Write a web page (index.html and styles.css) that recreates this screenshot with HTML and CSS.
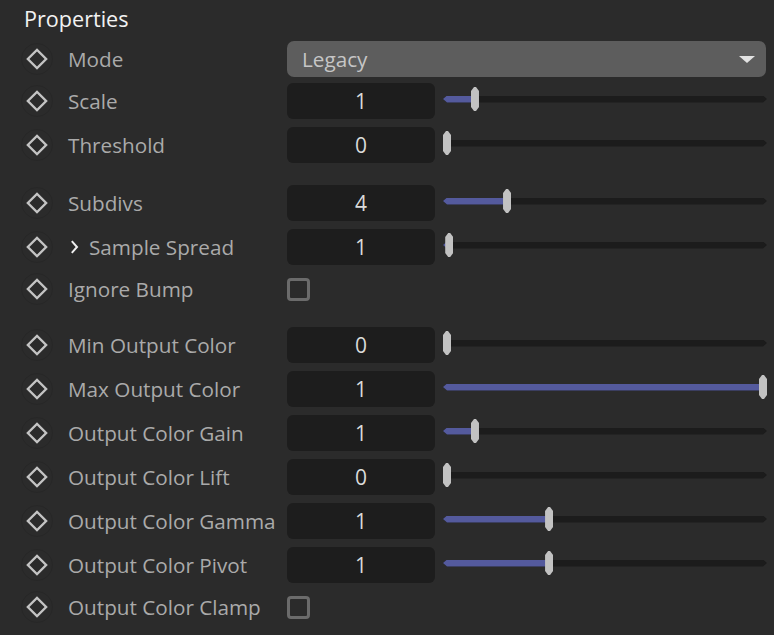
FILE: index.html
```html
<!DOCTYPE html>
<html>
<head>
<meta charset="utf-8">
<link rel="stylesheet" href="styles.css">
</head>
<body>
<div class="panel">
  <div class="title">Properties</div>

  <div class="group">
    <div class="row row--select">
      <span class="key"><svg viewBox="0 0 22 22" width="22" height="22"><rect x="4.5" y="4.5" width="13" height="13" transform="rotate(45 11 11)"/></svg></span>
      <span class="label">Mode</span>
      <div class="select"><span>Legacy</span><i class="caret"></i></div>
    </div>
    <div class="row">
      <span class="key"><svg viewBox="0 0 22 22" width="22" height="22"><rect x="4.5" y="4.5" width="13" height="13" transform="rotate(45 11 11)"/></svg></span>
      <span class="label">Scale</span>
      <div class="numslider"><div class="num">1</div><div class="slider" style="--v:0.0886"><div class="track"><div class="fill"></div></div><div class="thumb"></div></div></div>
    </div>
    <div class="row">
      <span class="key"><svg viewBox="0 0 22 22" width="22" height="22"><rect x="4.5" y="4.5" width="13" height="13" transform="rotate(45 11 11)"/></svg></span>
      <span class="label">Threshold</span>
      <div class="numslider"><div class="num">0</div><div class="slider" style="--v:0"><div class="track"><div class="fill"></div></div><div class="thumb"></div></div></div>
    </div>
  </div>

  <div class="group">
    <div class="row">
      <span class="key"><svg viewBox="0 0 22 22" width="22" height="22"><rect x="4.5" y="4.5" width="13" height="13" transform="rotate(45 11 11)"/></svg></span>
      <span class="label">Subdivs</span>
      <div class="numslider"><div class="num">4</div><div class="slider" style="--v:0.19"><div class="track"><div class="fill"></div></div><div class="thumb"></div></div></div>
    </div>
    <div class="row">
      <span class="key"><svg viewBox="0 0 22 22" width="22" height="22"><rect x="4.5" y="4.5" width="13" height="13" transform="rotate(45 11 11)"/></svg></span>
      <span class="label"><svg class="chev" viewBox="0 0 9 16" width="9" height="16"><polyline points="1.8,2.2 7,8 1.8,13.8"/></svg>Sample Spread</span>
      <div class="numslider"><div class="num">1</div><div class="slider" style="--v:0.007"><div class="track"><div class="fill"></div></div><div class="thumb"></div></div></div>
    </div>
    <div class="row row--check">
      <span class="key"><svg viewBox="0 0 22 22" width="22" height="22"><rect x="4.5" y="4.5" width="13" height="13" transform="rotate(45 11 11)"/></svg></span>
      <span class="label">Ignore Bump</span>
      <div class="checkwrap"><span class="check"></span></div>
    </div>
  </div>

  <div class="group">
    <div class="row">
      <span class="key"><svg viewBox="0 0 22 22" width="22" height="22"><rect x="4.5" y="4.5" width="13" height="13" transform="rotate(45 11 11)"/></svg></span>
      <span class="label">Min Output Color</span>
      <div class="numslider"><div class="num">0</div><div class="slider" style="--v:0"><div class="track"><div class="fill"></div></div><div class="thumb"></div></div></div>
    </div>
    <div class="row">
      <span class="key"><svg viewBox="0 0 22 22" width="22" height="22"><rect x="4.5" y="4.5" width="13" height="13" transform="rotate(45 11 11)"/></svg></span>
      <span class="label">Max Output Color</span>
      <div class="numslider"><div class="num">1</div><div class="slider" style="--v:1"><div class="track"><div class="fill"></div></div><div class="thumb"></div></div></div>
    </div>
    <div class="row">
      <span class="key"><svg viewBox="0 0 22 22" width="22" height="22"><rect x="4.5" y="4.5" width="13" height="13" transform="rotate(45 11 11)"/></svg></span>
      <span class="label">Output Color Gain</span>
      <div class="numslider"><div class="num">1</div><div class="slider" style="--v:0.0886"><div class="track"><div class="fill"></div></div><div class="thumb"></div></div></div>
    </div>
    <div class="row">
      <span class="key"><svg viewBox="0 0 22 22" width="22" height="22"><rect x="4.5" y="4.5" width="13" height="13" transform="rotate(45 11 11)"/></svg></span>
      <span class="label">Output Color Lift</span>
      <div class="numslider"><div class="num">0</div><div class="slider" style="--v:0"><div class="track"><div class="fill"></div></div><div class="thumb"></div></div></div>
    </div>
    <div class="row">
      <span class="key"><svg viewBox="0 0 22 22" width="22" height="22"><rect x="4.5" y="4.5" width="13" height="13" transform="rotate(45 11 11)"/></svg></span>
      <span class="label">Output Color Gamma</span>
      <div class="numslider"><div class="num">1</div><div class="slider" style="--v:0.323"><div class="track"><div class="fill"></div></div><div class="thumb"></div></div></div>
    </div>
    <div class="row">
      <span class="key"><svg viewBox="0 0 22 22" width="22" height="22"><rect x="4.5" y="4.5" width="13" height="13" transform="rotate(45 11 11)"/></svg></span>
      <span class="label">Output Color Pivot</span>
      <div class="numslider"><div class="num">1</div><div class="slider" style="--v:0.323"><div class="track"><div class="fill"></div></div><div class="thumb"></div></div></div>
    </div>
    <div class="row row--check">
      <span class="key"><svg viewBox="0 0 22 22" width="22" height="22"><rect x="4.5" y="4.5" width="13" height="13" transform="rotate(45 11 11)"/></svg></span>
      <span class="label">Output Color Clamp</span>
      <div class="checkwrap"><span class="check"></span></div>
    </div>
  </div>
</div>
</body>
</html>
```

FILE: styles.css
```css
html, body {
  margin: 0;
  padding: 0;
  background: #2b2b2b;
}
body {
  font-family: "Open Sans", "Noto Sans", sans-serif;
  width: 774px;
  height: 635px;
  overflow: hidden;
}
.panel {
  padding: 0 7px 0 21px;
  display: flex;
  flex-direction: column;
  gap: 22px;
}
.title {
  color: #f2f2f2;
  font-size: 21.6px;
  line-height: 28px;
  padding: 5px 0 0 3px;
  height: 28px;
  margin-bottom: -14px;
}
.group {
  display: flex;
  flex-direction: column;
  gap: 8px;
}
.row {
  display: grid;
  grid-template-columns: 47px 219px 1fr;
  align-items: center;
  height: 36px;
}
.row--select { margin-bottom: -2px; }
.row--check { height: 32px; }
.key {
  width: 30px;
  height: 30px;
  border: 1px solid #272727;
  border-radius: 50%;
  display: flex;
  align-items: center;
  justify-content: center;
}
.key svg rect {
  fill: none;
  stroke: #c4c4c4;
  stroke-width: 2.3;
}
.label {
  color: #aaaaaa;
  font-size: 20.7px;
  white-space: nowrap;
  display: flex;
  align-items: center;
}
.chev {
  margin: 0 10px 0 2px;
}
.chev polyline {
  fill: none;
  stroke: #f0f0f0;
  stroke-width: 2;
}
.select {
  height: 36px;
  background: #5d5d5d;
  border-radius: 7px;
  display: flex;
  align-items: center;
  justify-content: space-between;
  padding: 0 11px 0 15px;
  margin-right: 1px;
  color: #c6c6c6;
  font-size: 20.7px;
}
.caret {
  width: 0;
  height: 0;
  border-left: 8px solid transparent;
  border-right: 8px solid transparent;
  border-top: 7px solid #e2e2e2;
}
.numslider {
  display: grid;
  grid-template-columns: 148px 1fr;
  column-gap: 8px;
  align-items: center;
  height: 36px;
}
.num {
  height: 36px;
  background: #1d1d1d;
  border-radius: 6px;
  color: #dadada;
  font-size: 21px;
  display: flex;
  align-items: center;
  justify-content: center;
}
.slider {
  position: relative;
  height: 24px;
  margin-bottom: 4px;
  display: flex;
  align-items: center;
}
.track {
  width: 100%;
  height: 7px;
  background: #1c1c1c;
  clip-path: polygon(4px 0, calc(100% - 4px) 0, 100% 50%, calc(100% - 4px) 100%, 4px 100%, 0 50%);
}
.fill {
  height: 100%;
  width: calc(4px + var(--v) * (100% - 8px));
  background: #545a9d;
}
.thumb {
  position: absolute;
  top: 0;
  left: calc(var(--v) * (100% - 8px));
  width: 8px;
  height: 24px;
  background: #c2c2c2;
  clip-path: polygon(0 4px, 3px 0, 5px 0, 100% 4px, 100% calc(100% - 4px), 5px 100%, 3px 100%, 0 calc(100% - 4px));
}
.checkwrap {
  display: flex;
  align-items: center;
}
.check {
  width: 17px;
  height: 17px;
  border: 3px solid #6b6b6b;
  border-radius: 4px;
}
```
